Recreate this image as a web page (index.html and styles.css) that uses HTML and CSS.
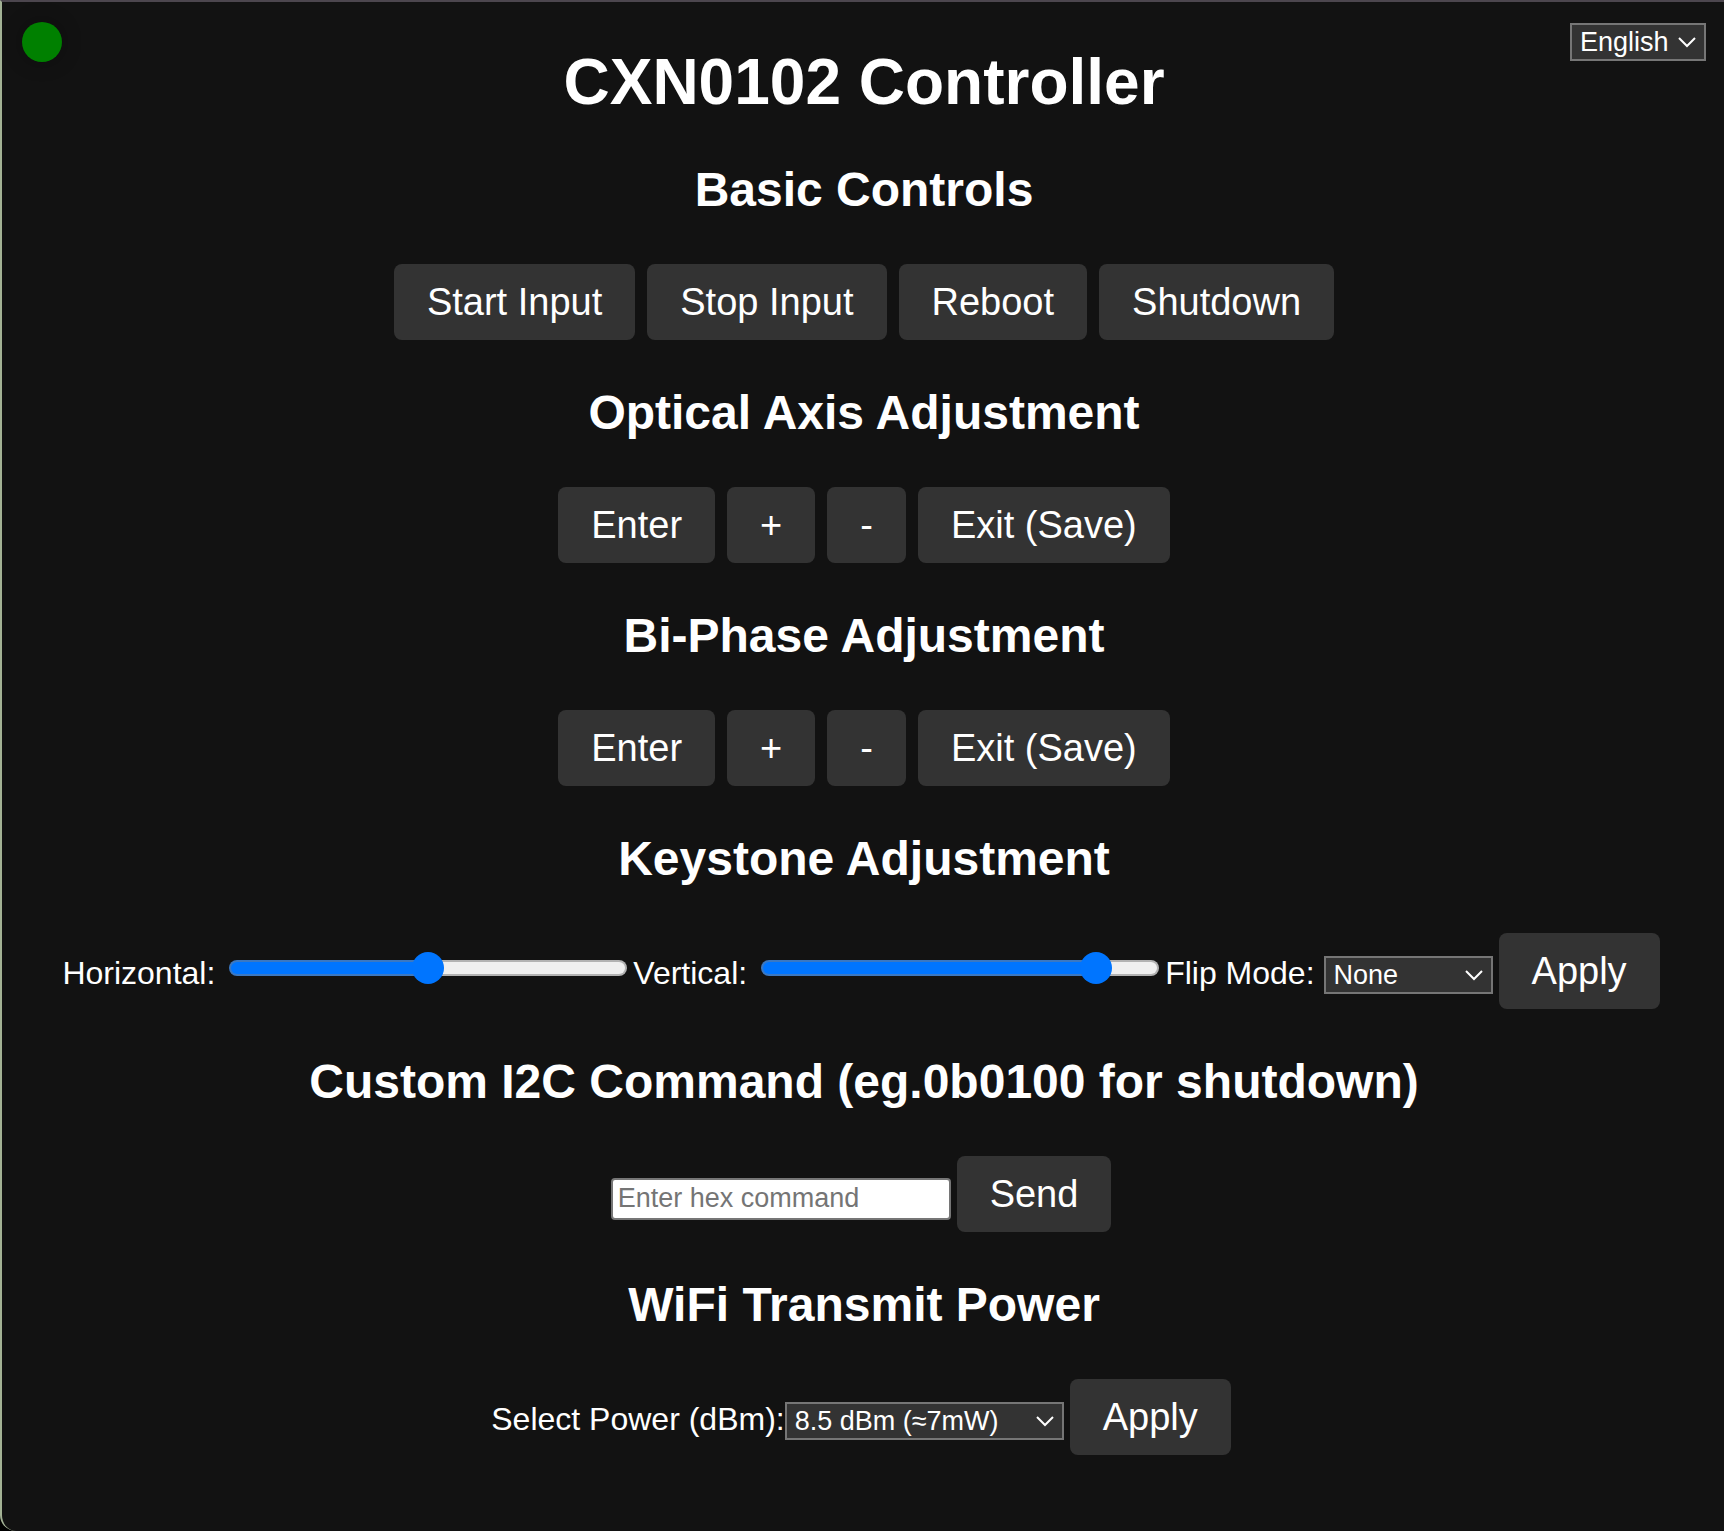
FILE: index.html
```html
<!DOCTYPE html>
<html lang="en">
<head>
  <meta charset="utf-8">
  <meta name="viewport" content="width=device-width, initial-scale=1">
  <title>CXN0102 Controller</title>
  <link rel="stylesheet" href="styles.css">
</head>
<body>
  <div class="window">
    <header class="header">
      <span class="status" role="img" aria-label="Connected"></span>
      <h1 class="title">CXN0102 Controller</h1>
      <select class="select select-language" aria-label="Language">
        <option>English</option>
      </select>
    </header>

    <main class="content">
      <section class="section">
        <h2 class="section-title">Basic Controls</h2>
        <div class="buttons">
          <button class="button" type="button">Start Input</button>
          <button class="button" type="button">Stop Input</button>
          <button class="button" type="button">Reboot</button>
          <button class="button" type="button">Shutdown</button>
        </div>
      </section>

      <section class="section">
        <h2 class="section-title">Optical Axis Adjustment</h2>
        <div class="buttons">
          <button class="button" type="button">Enter</button>
          <button class="button" type="button">+</button>
          <button class="button" type="button">-</button>
          <button class="button" type="button">Exit (Save)</button>
        </div>
      </section>

      <section class="section">
        <h2 class="section-title">Bi-Phase Adjustment</h2>
        <div class="buttons">
          <button class="button" type="button">Enter</button>
          <button class="button" type="button">+</button>
          <button class="button" type="button">-</button>
          <button class="button" type="button">Exit (Save)</button>
        </div>
      </section>

      <section class="section">
        <h2 class="section-title">Keystone Adjustment</h2>
        <form class="form">
          <div class="field field-slider">
            <label for="horizontal">Horizontal:</label>
            <input class="slider" id="horizontal" type="range" min="0" max="80" value="40" style="--level: 50%">
          </div>
          <div class="field field-slider">
            <label for="vertical">Vertical:</label>
            <input class="slider" id="vertical" type="range" min="0" max="80" value="70" style="--level: 87%">
          </div>
          <div class="field field-select">
            <label for="flip">Flip Mode:</label>
            <select class="select select-flip" id="flip">
              <option>None</option>
            </select>
          </div>
          <button class="button" type="button">Apply</button>
        </form>
      </section>

      <section class="section">
        <h2 class="section-title">Custom I2C Command (eg.0b0100 for shutdown)</h2>
        <form class="form">
          <input class="input" type="text" placeholder="Enter hex command" aria-label="Hex command">
          <button class="button" type="button">Send</button>
        </form>
      </section>

      <section class="section">
        <h2 class="section-title">WiFi Transmit Power</h2>
        <form class="form">
          <div class="field">
            <label for="power">Select Power (dBm):</label>
            <select class="select select-power" id="power">
              <option>8.5 dBm (≈7mW)</option>
            </select>
          </div>
          <button class="button" type="button">Apply</button>
        </form>
      </section>
    </main>
  </div>
</body>
</html>
```
FILE: styles.css
```css
* {
  box-sizing: border-box;
}

body {
  margin: 0;
  background: #000;
  color: #fff;
  font-family: "Liberation Sans", Arial, sans-serif;
  font-size: 32px;
  line-height: 36px;
}

.window {
  min-height: 100vh;
  padding-bottom: 64px;
  background: #121212;
  border-top: 2px solid #4c464e;
  border-left: 2px solid #a3b295;
  border-bottom-left-radius: 16px;
}

.header {
  display: grid;
  grid-template-columns: 1fr auto 1fr;
  align-items: start;
  padding: 20px 18px 0 20px;
}

.status {
  width: 40px;
  height: 40px;
  border-radius: 50%;
  background: #008000;
  box-shadow: 0 0 20px rgba(0, 0, 0, 0.3);
}

.title {
  margin: 25px 0 0;
  font-size: 64px;
  line-height: 70px;
}

.content {
  padding: 0 0 0 2px;
}

.section {
  padding-top: 45px;
}

.section-title {
  margin: 0 0 46px;
  font-size: 48px;
  line-height: 56px;
  text-align: center;
}

.buttons {
  display: flex;
  flex-wrap: wrap;
  justify-content: center;
  gap: 12px;
}

.form {
  display: flex;
  flex-wrap: wrap;
  align-items: baseline;
  justify-content: center;
  gap: 6px;
  padding-right: 6px;
}

.field {
  display: flex;
  align-items: baseline;
}

.field-slider {
  gap: 14px;
}

.field-select {
  gap: 9px;
}

.button {
  padding: 16px 33px;
  border: 0;
  border-radius: 8px;
  background: #333;
  color: #fff;
  font-family: inherit;
  font-size: 38px;
  line-height: 44px;
}

.select {
  height: 38px;
  padding: 0 30px 0 8px;
  appearance: none;
  border: 2px solid #767676;
  border-radius: 0;
  background: #333 url("data:image/svg+xml,%3Csvg xmlns='http://www.w3.org/2000/svg' width='18' height='11' viewBox='0 0 18 11'%3E%3Cpath d='M1 1 L9 9 L17 1' fill='none' stroke='white' stroke-width='2'/%3E%3C/svg%3E") no-repeat right 8px center;
  color: #fff;
  font-family: inherit;
  font-size: 27px;
  line-height: 34px;
}

.select-language {
  justify-self: end;
  width: 136px;
  margin-top: 1px;
}

.select-flip {
  width: 169px;
}

.select-power {
  width: 279px;
}

.input {
  width: 340px;
  height: 42px;
  padding: 2px 5px;
  border: 2px solid #767676;
  border-radius: 4px;
  background: #fff;
  color: #000;
  font-family: inherit;
  font-size: 27px;
}

.input::placeholder {
  color: #757575;
}

.slider {
  width: 398px;
  height: 32px;
  margin: 0;
  appearance: none;
  background: transparent;
}

.slider::-webkit-slider-runnable-track {
  height: 16px;
  border: 2px solid transparent;
  border-radius: 8px;
  background:
    linear-gradient(to right, #0075ff var(--level), #efefef var(--level)) padding-box,
    linear-gradient(to right, #3b78c2 var(--level), #b2b2b2 var(--level)) border-box;
}

.slider::-webkit-slider-thumb {
  width: 32px;
  height: 32px;
  margin-top: -10px;
  appearance: none;
  border: 0;
  border-radius: 50%;
  background: #0075ff;
}
```
